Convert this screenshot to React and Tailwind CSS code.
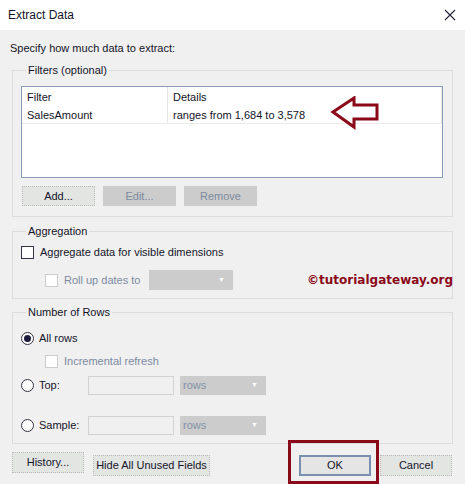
import React from "react";

const font = { fontFamily: '"Liberation Sans", Arial, sans-serif' };

function Btn({ w, children, disabled, primary }) {
  return (
    <button
      className={`h-full ${w} text-[11px] leading-none whitespace-nowrap ${
        disabled
          ? "bg-[#cccccc] border border-[#cccccc] text-[#7d8aa0]"
          : primary
          ? "bg-[#e5e5e5] border-2 border-[#7a8fae] text-[#141428]"
          : "bg-[#e3e5e3] border border-[#b9bcb9] border-dotted text-[#141428]"
      }`}
    >
      {children}
    </button>
  );
}

function Check({ disabled }) {
  return (
    <span
      className={`inline-block w-[13px] h-[13px] bg-white border ${
        disabled ? "border-[#cccccc]" : "border-[#333344]"
      }`}
    />
  );
}

function Radio({ checked }) {
  return (
    <span className="w-[13px] h-[13px] rounded-full border border-[#333344] bg-white flex items-center justify-center">
      {checked && <span className="w-[7px] h-[7px] rounded-full bg-[#1c1c3c]" />}
    </span>
  );
}

function Drop({ w, label }) {
  return (
    <div className={`${w} h-[19px] bg-[#cccccc] flex items-center justify-between pl-[3px] pr-[8px] text-[11px] text-[#8592a8]`}>
      <span>{label}</span>
      <span className="text-[7px] text-white">▼</span>
    </div>
  );
}

export default function App() {
  return (
    <div className="relative w-[465px] h-[484px] bg-[#f0f0f0] text-[#141428] overflow-hidden" style={font}>
      <div className="h-[30px] bg-white flex items-center justify-between pl-[8px] pr-[9px]">
        <span className="text-[12px]">Extract Data</span>
        <svg width="12" height="12" viewBox="0 0 12 12">
          <path d="M1 1 L11 11 M11 1 L1 11" stroke="#222238" strokeWidth="1.1" />
        </svg>
      </div>

      <div className="pt-[11px] pl-[10px] text-[11px] leading-[14px]">Specify how much data to extract:</div>

      <fieldset className="mt-[8px] mx-[12px] border border-[#dcdcdc] pl-[8px] pr-[9px] pb-[10px]">
        <legend className="ml-[5px] px-[2px] text-[11px] leading-[14px]">Filters (optional)</legend>
        <div className="mt-[9px] h-[92px] bg-white border border-[#8a9cba] text-[11px]">
          <div className="flex h-[20px] items-center">
            <div className="w-[146px] h-full pl-[5px] flex items-center border-r border-[#e6e6e6]">Filter</div>
            <div className="flex-1 pl-[5px] border-r border-[#e6e6e6] h-full flex items-center">Details</div>
          </div>
          <div className="flex h-[17px] border-b border-[#ebebeb]">
            <div className="w-[146px] h-full pl-[5px] flex items-center border-r border-[#e6e6e6]">SalesAmount</div>
            <div className="flex-1 pl-[5px] border-r border-[#e6e6e6] h-full flex items-center">ranges from 1,684 to 3,578</div>
          </div>
        </div>
        <div className="mt-[8px] h-[20px] flex gap-[8px] -ml-[7px] pl-[8px]">
          <Btn w="w-[73px]">Add...</Btn>
          <Btn w="w-[73px]" disabled>Edit...</Btn>
          <Btn w="w-[73px]" disabled>Remove</Btn>
        </div>
      </fieldset>

      <fieldset className="mt-[7px] mx-[12px] border border-[#dcdcdc] pl-[8px] pb-[8px]">
        <legend className="ml-[5px] px-[2px] text-[11px] leading-[14px]">Aggregation</legend>
        <div className="mt-[7px] h-[14px] flex items-center gap-[6px] text-[11px]">
          <Check />
          <span>Aggregate data for visible dimensions</span>
        </div>
        <div className="mt-[11px] h-[20px] flex items-center pl-[24px] text-[11px] text-[#7d8aa0]">
          <Check disabled />
          <span className="ml-[6px] w-[85px]">Roll up dates to</span>
          <Drop w="w-[84px] h-[20px]" label="" />
        </div>
      </fieldset>

      <fieldset className="mt-[6px] mx-[12px] border border-[#dcdcdc] pl-[8px] pb-[8px] text-[11px]">
        <legend className="ml-[5px] px-[2px] leading-[14px]">Number of Rows</legend>
        <div className="mt-[12px] h-[14px] flex items-center gap-[5px]">
          <Radio checked />
          <span>All rows</span>
        </div>
        <div className="mt-[9px] h-[14px] flex items-center gap-[6px] pl-[24px] text-[#7d8aa0]">
          <Check disabled />
          <span>Incremental refresh</span>
        </div>
        <div className="mt-[8px] h-[19px] flex items-center">
          <Radio />
          <span className="ml-[5px] w-[49px]">Top:</span>
          <div className="w-[86px] h-[19px] border border-[#d2d2d2]" />
          <div className="ml-[6px]"><Drop w="w-[86px]" label="rows" /></div>
        </div>
        <div className="mt-[21px] h-[19px] flex items-center">
          <Radio />
          <span className="ml-[5px] w-[49px]">Sample:</span>
          <div className="w-[86px] h-[19px] border border-[#d2d2d2]" />
          <div className="ml-[6px]"><Drop w="w-[86px]" label="rows" /></div>
        </div>
      </fieldset>

      <div className="mt-[8px] h-[21px] flex px-[12px]">
        <Btn w="w-[72px]">History...</Btn>
        <div className="ml-[9px] h-full"><Btn w="w-[117px]">Hide All Unused Fields</Btn></div>
        <div className="ml-[89px] h-full"><Btn w="w-[72px]" primary>OK</Btn></div>
        <div className="ml-[9px] h-full"><Btn w="w-[72px]">Cancel</Btn></div>
      </div>

      <svg className="absolute left-[330px] top-[96px]" width="50" height="34" viewBox="0 0 50 34">
        <path d="M3 16 L24 2 L24 9 L47 9 L47 23 L24 23 L24 31 Z" fill="none" stroke="#8b0a1a" strokeWidth="3" strokeLinejoin="miter" />
      </svg>

      <div
        className="absolute right-[12px] top-[271px] text-[12px] font-bold text-[#8b0a1a] leading-[18px]"
        style={{ fontFamily: '"DejaVu Sans", Verdana, sans-serif' }}
      >
        ©tutorialgateway.org
      </div>

      <div className="absolute left-[288px] top-[440px] w-[91px] h-[44px] border-[3px] border-[#8b0a1a]" />
    </div>
  );
}
